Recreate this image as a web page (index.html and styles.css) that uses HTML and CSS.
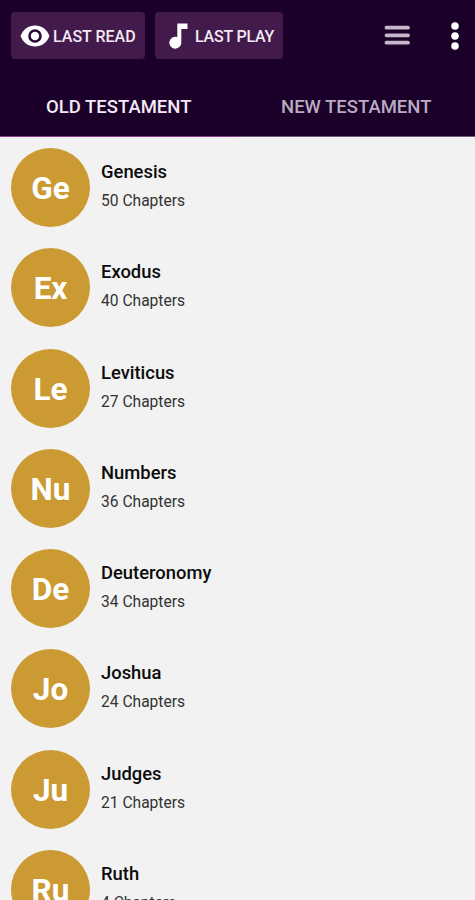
FILE: index.html
```html
<!DOCTYPE html>
<html lang="en">
<head>
    <meta charset="UTF-8">
    <meta name="viewport" content="width=device-width, initial-scale=1.0">
    <title>Bible Books</title>
    <link rel="stylesheet" href="styles.css">
</head>
<body>
    <header class="header">
        <div class="toolbar">
            <button class="btn btn-read">
                <svg class="eye" width="30" height="22" viewBox="0 0 30 22">
                    <path d="M0.5 11C3 4.5 8.5 0.5 15 0.5S27 4.5 29.5 11C27 17.5 21.5 21.5 15 21.5S3 17.5 0.5 11z" fill="#fff"/>
                    <circle cx="15" cy="11" r="5.5" fill="#fff" stroke="#2a0a38" stroke-width="2.6"/>
                </svg>
                <span>LAST READ</span>
            </button>
            <button class="btn btn-play">
                <svg class="note" width="19" height="26" viewBox="0 0 19 26">
                    <path d="M8.3 0.5H18.5V6H12.3V19.2A6 6 0 1 1 8.3 14z" fill="#fff"/>
                </svg>
                <span>LAST PLAY</span>
            </button>
            <div class="actions">
                <svg width="26" height="21" viewBox="0 0 26 21">
                    <path d="M2.5 2.7H24M2.5 10.3H24M2.5 17.7H24" stroke="#c5b7cc" stroke-width="3.8" stroke-linecap="round"/>
                </svg>
                <svg class="more" width="8" height="28" viewBox="0 0 8 28">
                    <circle cx="4" cy="4" r="3.8" fill="#fff"/>
                    <circle cx="4" cy="14" r="3.8" fill="#fff"/>
                    <circle cx="4" cy="24" r="3.8" fill="#fff"/>
                </svg>
            </div>
        </div>
        <nav class="tabs">
            <a class="tab active"><span>OLD TESTAMENT</span></a>
            <a class="tab"><span>NEW TESTAMENT</span></a>
        </nav>
    </header>

    <main class="books">
        <div class="book">
            <div class="avatar"><span>Ge</span></div>
            <div class="info">
                <div class="name">Genesis</div>
                <div class="chapters">50 Chapters</div>
            </div>
        </div>
        <div class="book">
            <div class="avatar"><span>Ex</span></div>
            <div class="info">
                <div class="name">Exodus</div>
                <div class="chapters">40 Chapters</div>
            </div>
        </div>
        <div class="book">
            <div class="avatar"><span>Le</span></div>
            <div class="info">
                <div class="name">Leviticus</div>
                <div class="chapters">27 Chapters</div>
            </div>
        </div>
        <div class="book">
            <div class="avatar"><span>Nu</span></div>
            <div class="info">
                <div class="name">Numbers</div>
                <div class="chapters">36 Chapters</div>
            </div>
        </div>
        <div class="book">
            <div class="avatar"><span>De</span></div>
            <div class="info">
                <div class="name">Deuteronomy</div>
                <div class="chapters">34 Chapters</div>
            </div>
        </div>
        <div class="book">
            <div class="avatar"><span>Jo</span></div>
            <div class="info">
                <div class="name">Joshua</div>
                <div class="chapters">24 Chapters</div>
            </div>
        </div>
        <div class="book">
            <div class="avatar"><span>Ju</span></div>
            <div class="info">
                <div class="name">Judges</div>
                <div class="chapters">21 Chapters</div>
            </div>
        </div>
        <div class="book">
            <div class="avatar"><span>Ru</span></div>
            <div class="info">
                <div class="name">Ruth</div>
                <div class="chapters">4 Chapters</div>
            </div>
        </div>
    </main>
</body>
</html>
```
FILE: styles.css
```css
* {
    box-sizing: border-box;
}

body {
    margin: 0;
    height: 100vh;
    overflow: hidden;
    background-color: #f2f2f2;
    font-family: Roboto, "Liberation Sans", sans-serif;
}

.header {
    height: 137px;
    background-color: #1b0029;
}

.toolbar {
    display: flex;
    height: 76px;
    padding: 12px 16px 0 11px;
}

.btn {
    display: flex;
    align-items: center;
    height: 47px;
    padding: 0;
    border: none;
    border-radius: 4px;
    background-color: #421a4b;
    color: #f3e9f5;
    font-family: inherit;
    font-size: 16px;
    font-weight: 500;
    white-space: nowrap;
    cursor: pointer;
}

.btn span {
    padding-top: 1px;
}

.btn-read {
    width: 134px;
    padding-left: 9px;
    margin-right: 10px;
}

.btn-play {
    width: 128px;
    padding-left: 14px;
    letter-spacing: -0.2px;
}

.eye {
    margin-right: 3px;
}

.note {
    margin-right: 7px;
}

.actions {
    display: flex;
    align-items: center;
    height: 47px;
    margin-left: auto;
}

.more {
    margin-left: 41px;
}

.tabs {
    display: flex;
    height: 61px;
}

.tab {
    display: flex;
    flex: 1;
    align-items: center;
    justify-content: center;
    padding-top: 1px;
    border-bottom: 1px solid #705c79;
    color: #b9acc0;
    font-size: 18.5px;
    font-weight: 500;
}

.tab.active {
    border-bottom-color: #8a4391;
    color: #f3ebf6;
}

.books {
    padding: 11px 11px 0;
}

.book {
    display: flex;
    height: 79px;
    margin-bottom: 21.28px;
}

.avatar {
    display: flex;
    align-items: center;
    justify-content: center;
    width: 79px;
    height: 79px;
    padding-top: 2px;
    margin-right: 11px;
    border-radius: 50%;
    background-color: #cc9a33;
    color: #fff;
    font-size: 31.5px;
    font-weight: 700;
}

.info {
    padding-top: 13px;
}

.name {
    color: #0c0c0c;
    font-size: 18.4px;
    font-weight: 500;
    line-height: 22px;
}

.chapters {
    margin-top: 8px;
    color: #333;
    font-size: 15.6px;
    line-height: 20px;
}
```
